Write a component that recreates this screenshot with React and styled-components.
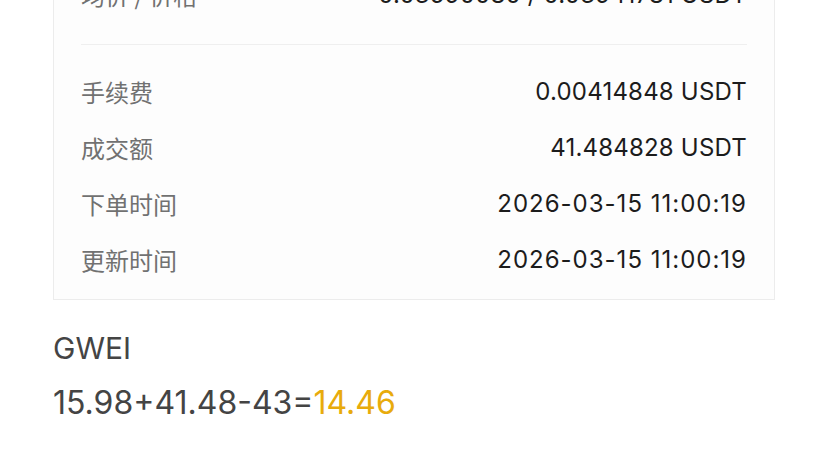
import React from "react";
import styled, { createGlobalStyle } from "styled-components";

const Global = createGlobalStyle`
  html, body { margin: 0; padding: 0; background: #ffffff; }
  body { font-family: Inter, "Noto Sans CJK SC", sans-serif; overflow: hidden; }
`;

const Page = styled.div`
  width: 828px;
  height: 465px;
  overflow: hidden;
  padding: 0 53px;
  box-sizing: border-box;
`;

const Card = styled.div`
  margin-top: -41px;
  background: #fdfdfd;
  border: 1px solid #ececec;
  padding: 0 27px;
`;

const Section = styled.div`
  padding: ${(p) => p.$pad};
  border-top: ${(p) => (p.$divided ? "1px solid #efefef" : "none")};
`;

const Row = styled.div`
  display: flex;
  align-items: center;
  justify-content: space-between;
  height: 56px;
`;

const Label = styled.span`
  font-family: "Noto Sans CJK SC", sans-serif;
  font-size: 24px;
  color: #717171;
`;

const Value = styled.span`
  font-family: Inter, "Noto Sans CJK SC", sans-serif;
  font-size: 24px;
  color: #1c1c1c;
  letter-spacing: ${(p) => (p.$wide ? "1px" : "0.2px")};
`;

const Summary = styled.div`
  padding-top: 30px;
  display: flex;
  flex-direction: column;
  gap: 18px;
  font-family: Inter, sans-serif;
  color: #444444;
`;

const Title = styled.div`
  font-size: 30px;
  line-height: 36px;
`;

const Formula = styled.div`
  font-size: 32px;
  line-height: 38px;
`;

const Result = styled.span`
  color: #e8ab0c;
`;

const top = [["均价 / 价格", "0.03590080 / 0.03941781 USDT"]];
const rows = [
  ["手续费", "0.00414848 USDT"],
  ["成交额", "41.484828 USDT"],
  ["下单时间", "2026-03-15 11:00:19", true],
  ["更新时间", "2026-03-15 11:00:19", true],
];

export default function App() {
  return (
    <>
      <Global />
      <Page>
        <Card>
          <Section $pad="6px 0 22px">
            {top.map(([l, v]) => (
              <Row key={l}>
                <Label>{l}</Label>
                <Value>{v}</Value>
              </Row>
            ))}
          </Section>
          <Section $divided $pad="18px 0 12px">
            {rows.map(([l, v, wide]) => (
              <Row key={l}>
                <Label>{l}</Label>
                <Value $wide={wide}>{v}</Value>
              </Row>
            ))}
          </Section>
        </Card>
        <Summary>
          <Title>GWEI</Title>
          <Formula>
            15.98+41.48-43=<Result>14.46</Result>
          </Formula>
        </Summary>
      </Page>
    </>
  );
}
